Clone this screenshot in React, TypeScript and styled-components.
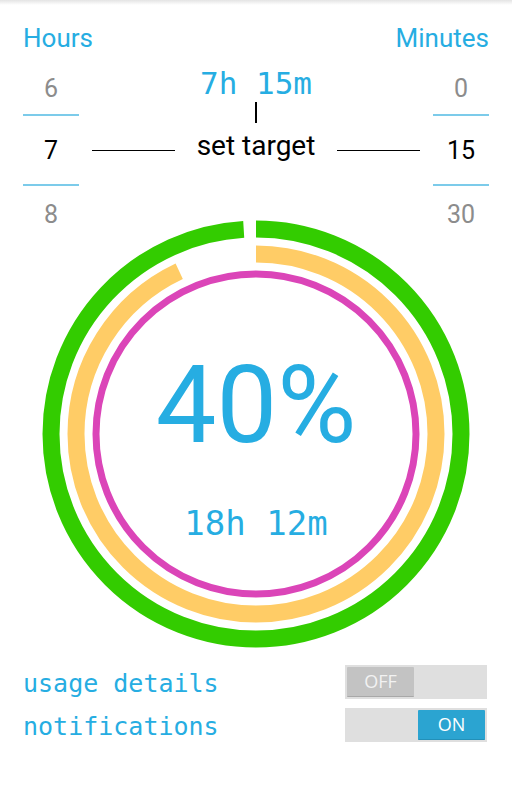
import * as React from "react";
import styled, { createGlobalStyle } from "styled-components";

const BLUE = "#26ade2";

const GlobalStyle = createGlobalStyle`
  html, body {
    margin: 0;
    padding: 0;
    background: #ffffff;
  }
`;

const Page = styled.div`
  width: 512px;
  height: 800px;
  box-sizing: border-box;
  padding: 23px 23px 0;
  display: flex;
  flex-direction: column;
  background: linear-gradient(#e4e4e4, #ffffff 5px);
  font-family: Roboto, "Liberation Sans", sans-serif;
  overflow: hidden;
`;

const Header = styled.div`
  display: flex;
  justify-content: space-between;
  height: 43px;
  font-size: 26px;
  line-height: 30px;
  color: ${BLUE};
`;

const PickerArea = styled.div`
  display: grid;
  grid-template-columns: 56px 1fr 56px;
  height: 153px;
`;

const Picker = styled.div`
  display: flex;
  flex-direction: column;
  align-items: stretch;
`;

const Cell = styled.div<{ $h: number; $lh: number; $active?: boolean }>`
  height: ${(p) => p.$h}px;
  line-height: ${(p) => p.$lh}px;
  text-align: center;
  font-size: 25px;
  color: ${(p) => (p.$active ? "#000000" : "#8c8c8c")};
`;

const Divider = styled.div`
  height: 2px;
  background: #7ccbea;
`;

const Middle = styled.div`
  display: flex;
  flex-direction: column;
  align-items: center;
`;

const TargetTime = styled.div`
  font-family: "DejaVu Sans Mono", "Liberation Mono", monospace;
  font-size: 31px;
  line-height: 34px;
  color: ${BLUE};
  white-space: pre;
`;

const Cursor = styled.div`
  width: 2px;
  height: 21px;
  margin-top: 2px;
  background: #000000;
`;

const TargetRow = styled.div`
  display: flex;
  align-self: stretch;
  align-items: flex-start;
  gap: 22px;
  padding: 0 13px;
  margin-top: 7px;
`;

const Rule = styled.div`
  flex: 1;
  height: 1px;
  margin-top: 20px;
  background: #000000;
`;

const TargetLabel = styled.div`
  font-size: 28px;
  line-height: 32px;
  color: #000000;
`;

const Dial = styled.div`
  display: grid;
  align-self: center;
  width: 430px;
  height: 430px;
  & > * {
    grid-area: 1 / 1;
  }
`;

const DialText = styled.div`
  display: flex;
  flex-direction: column;
  align-items: center;
  padding-top: 132px;
  gap: 44px;
  color: ${BLUE};
`;

const Percent = styled.div`
  font-size: 108px;
  line-height: 108px;
`;

const Usage = styled.div`
  font-family: "DejaVu Sans Mono", "Liberation Mono", monospace;
  font-size: 34px;
  line-height: 40px;
  white-space: pre;
`;

const Settings = styled.div`
  display: flex;
  flex-direction: column;
  gap: 9px;
  margin-top: 16px;
  padding-right: 2px;
`;

const SettingRow = styled.div`
  display: flex;
  justify-content: space-between;
  align-items: flex-start;
  height: 34px;
`;

const SettingLabel = styled.div`
  font-family: "DejaVu Sans Mono", "Liberation Mono", monospace;
  font-size: 25px;
  line-height: 38px;
  color: ${BLUE};
`;

const Track = styled.div<{ $on: boolean }>`
  width: 142px;
  height: 34px;
  box-sizing: border-box;
  padding: 2px;
  background: #dfdfdf;
  display: flex;
  justify-content: ${(p) => (p.$on ? "flex-end" : "flex-start")};
`;

const Thumb = styled.div<{ $on: boolean }>`
  width: 67px;
  height: 30px;
  box-sizing: border-box;
  border-radius: 1px;
  background: ${(p) => (p.$on ? "#2ba4d1" : "#c3c3c3")};
  border-bottom: 1px solid ${(p) => (p.$on ? "#2390b8" : "#a8a8a8")};
  color: ${(p) => (p.$on ? "#ffffff" : "#f2f2f2")};
  font-family: "Open Sans", "Liberation Sans", sans-serif;
  font-size: 18px;
  line-height: 29px;
  text-align: center;
`;

function Toggle({ on }: { on: boolean }) {
  return (
    <Track $on={on}>
      <Thumb $on={on}>{on ? "ON" : "OFF"}</Thumb>
    </Track>
  );
}

// arc drawn from 12 o'clock clockwise
function Arc({ r, width, color, sweep }: { r: number; width: number; color: string; sweep: number }) {
  const c = 2 * Math.PI * r;
  return (
    <circle
      cx={215}
      cy={215}
      r={r}
      fill="none"
      stroke={color}
      strokeWidth={width}
      strokeDasharray={sweep >= 360 ? undefined : `${(c * sweep) / 360} ${c}`}
      transform="rotate(-90 215 215)"
    />
  );
}

export default function App() {
  const hours = ["6", "7", "8"];
  const minutes = ["0", "15", "30"];

  const renderPicker = (vals: string[]) => (
    <Picker>
      <Cell $h={48} $lh={45}>{vals[0]}</Cell>
      <Divider />
      <Cell $h={68} $lh={70} $active>{vals[1]}</Cell>
      <Divider />
      <Cell $h={33} $lh={57}>{vals[2]}</Cell>
    </Picker>
  );

  return (
    <>
      <GlobalStyle />
      <Page>
        <Header>
          <span>Hours</span>
          <span>Minutes</span>
        </Header>

        <PickerArea>
          {renderPicker(hours)}
          <Middle>
            <TargetTime>7h 15m</TargetTime>
            <Cursor />
            <TargetRow>
              <Rule />
              <TargetLabel>set target</TargetLabel>
              <Rule />
            </TargetRow>
          </Middle>
          {renderPicker(minutes)}
        </PickerArea>

        <Dial>
          <svg width={430} height={430} viewBox="0 0 430 430">
            <Arc r={205} width={17} color="#33cc00" sweep={356.4} />
            <Arc r={180} width={17} color="#ffcc66" sweep={334.6} />
            <Arc r={160} width={7} color="#db45b8" sweep={360} />
          </svg>
          <DialText>
            <Percent>40%</Percent>
            <Usage>18h 12m</Usage>
          </DialText>
        </Dial>

        <Settings>
          <SettingRow>
            <SettingLabel>usage details</SettingLabel>
            <Toggle on={false} />
          </SettingRow>
          <SettingRow>
            <SettingLabel>notifications</SettingLabel>
            <Toggle on />
          </SettingRow>
        </Settings>
      </Page>
    </>
  );
}
